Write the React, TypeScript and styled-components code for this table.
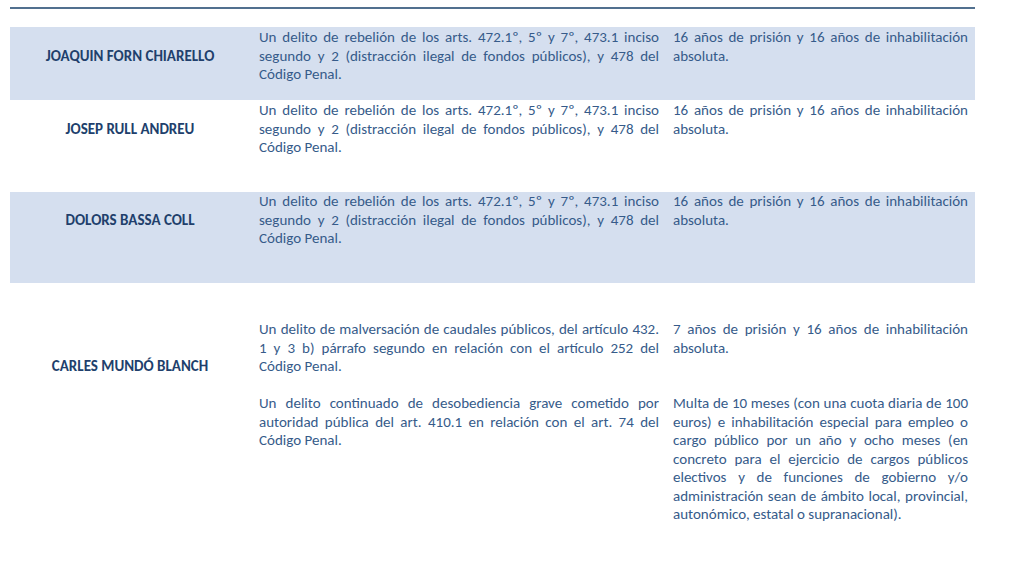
import React from "react";
import styled, {createGlobalStyle} from "styled-components";

const GlobalStyle = createGlobalStyle`
  html, body {
    margin: 0;
    padding: 0;
    background: #ffffff;
  }
  body {
    font-family: "Carlito", "Lato", "Liberation Sans", sans-serif;
    -webkit-font-smoothing: antialiased;
  }
`;

const Page = styled.div`
  width: 1024px;
  height: 576px;
  overflow: hidden;
  padding: 7px 49px 0 10px;
  box-sizing: border-box;
`;

const Rule = styled.div`
  height: 2px;
  background: #51708f;
  margin-bottom: 18px;
`;

const Row = styled.div<{ $shaded: boolean; $height: number; $pad: number }>`
  display: grid;
  grid-template-columns: 249px 716px;
  height: ${p => p.$height}px;
  padding-top: ${p => p.$pad}px;
  box-sizing: border-box;
  background: ${p => (p.$shaded ? "#d5dfef" : "transparent")};
`;

const Name = styled.div<{ $lines: number }>`
  padding-right: 9px;
  padding-top: ${p => p.$lines * 18.5}px;
  text-align: center;
  font-weight: 700;
  font-size: 15px;
  line-height: 18.5px;
  color: #213f6c;
`;

const Offences = styled.div`
  display: flex;
  flex-direction: column;
  gap: 18.5px;
`;

const Offence = styled.div`
  display: grid;
  grid-template-columns: 414px 302px;
  align-items: start;
`;

const Cell = styled.div<{ $width: number }>`
  width: ${p => p.$width}px;
  font-size: 15px;
  line-height: 18.5px;
  color: #365b8a;
`;

const Line = styled.div<{ $last: boolean }>`
  white-space: nowrap;
  text-align: left;
  text-align-last: ${p => (p.$last ? "left" : "justify")};
`;

type Item = { crime: string[]; penalty: string[] };
type Entry = { name: string; shaded: boolean; height: number; pad: number; nameLines: number; items: Item[] };

const rebelion: Item = {
  crime: [
    "Un delito de rebelión de los arts. 472.1º, 5º y 7º, 473.1 inciso",
    "segundo y 2 (distracción ilegal de fondos públicos), y 478 del",
    "Código Penal.",
  ],
  penalty: ["16 años de prisión y 16 años de inhabilitación", "absoluta."],
};

const entries: Entry[] = [
  {name: "JOAQUIN FORN CHIARELLO", shaded: true, height: 73, pad: 1, nameLines: 1, items: [rebelion]},
  {name: "JOSEP RULL ANDREU", shaded: false, height: 92, pad: 1, nameLines: 1, items: [rebelion]},
  {name: "DOLORS BASSA COLL", shaded: true, height: 91, pad: 0, nameLines: 1, items: [rebelion]},
  {
    name: "CARLES MUNDÓ BLANCH",
    shaded: false,
    height: 293,
    pad: 37,
    nameLines: 2,
    items: [
      {
        crime: [
          "Un delito de malversación de caudales públicos, del artículo 432.",
          "1 y 3 b) párrafo segundo en relación con el artículo 252 del",
          "Código Penal.",
        ],
        penalty: ["7 años de prisión y 16 años de inhabilitación", "absoluta."],
      },
      {
        crime: [
          "Un delito continuado de desobediencia grave cometido por",
          "autoridad pública del art. 410.1 en relación con el art. 74 del",
          "Código Penal.",
        ],
        penalty: [
          "Multa de 10 meses (con una cuota diaria de 100",
          "euros) e inhabilitación especial para empleo o",
          "cargo público por un año y ocho meses (en",
          "concreto para el ejercicio de cargos públicos",
          "electivos y de funciones de gobierno y/o",
          "administración sean de ámbito local, provincial,",
          "autonómico, estatal o supranacional).",
        ],
      },
    ],
  },
];

function Paragraph({lines, width}: { lines: string[]; width: number }) {
  return (
    <Cell $width={width}>
      {lines.map((l, i) => (
        <Line key={i} $last={i === lines.length - 1}>{l}</Line>
      ))}
    </Cell>
  );
}

export default function App() {
  return (
    <>
      <GlobalStyle/>
      <Page>
        <Rule/>
        {entries.map(e => (
          <Row key={e.name} $shaded={e.shaded} $height={e.height} $pad={e.pad}>
            <Name $lines={e.nameLines}>{e.name}</Name>
            <Offences>
              {e.items.map((it, i) => (
                <Offence key={i}>
                  <Paragraph lines={it.crime} width={400}/>
                  <Paragraph lines={it.penalty} width={295}/>
                </Offence>
              ))}
            </Offences>
          </Row>
        ))}
      </Page>
    </>
  );
}
